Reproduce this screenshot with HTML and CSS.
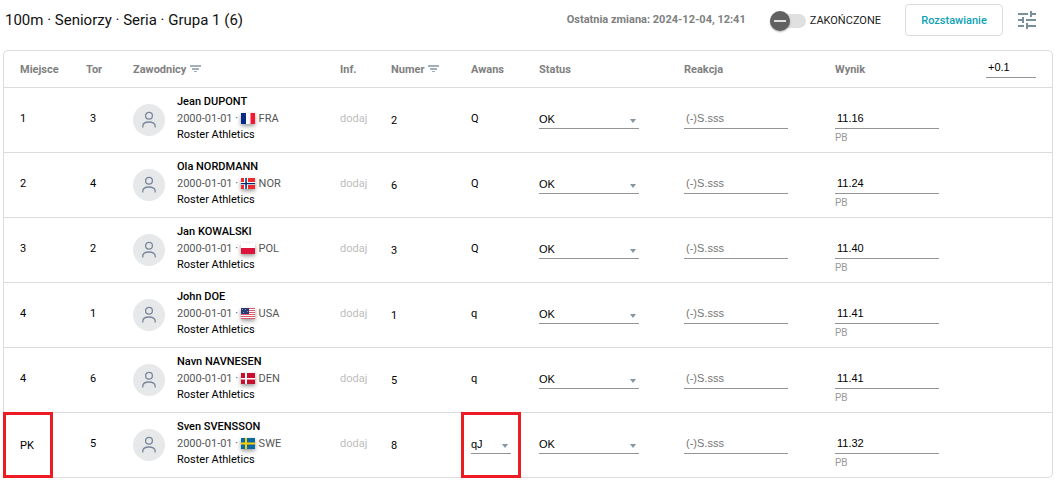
FILE: index.html
```html
<!DOCTYPE html>
<html lang="pl">
<head>
<meta charset="utf-8">
<title>100m · Seniorzy</title>
<link rel="stylesheet" href="styles.css">
</head>
<body>
<svg class="sprite" aria-hidden="true">
  <symbol id="filter" viewBox="0 0 12 8"><path d="M0 0h11v2H0zM2 3h7v2H2zM4 6h3v1H4z"/></symbol>
  <symbol id="person" viewBox="0 0 16 18"><circle cx="8" cy="4.7" r="3.4"/><path d="M1.8 16.5v-1.3c0-2.600 2.400-4.200 6.200-4.200s6.200 1.600 6.200 4.200v1.300"/></symbol>
  <symbol id="fra" viewBox="0 0 14 11"><path fill="#fff" d="M0 0h14v11H0z"/><path fill="#0a2a88" d="M0 0h5v11H0z"/><path fill="#f5152f" d="M9.500 0H14v11H9.500z"/></symbol>
  <symbol id="nor" viewBox="0 0 14 11"><path fill="#ef2b2d" d="M0 0h14v11H0z"/><path fill="#fff" d="M3 0h4v11H3zM0 4h14v3H0z"/><path fill="#002868" d="M4.300 0h1.500v11H4.300zM0 4.900h14v1.300H0z"/></symbol>
  <symbol id="pol" viewBox="0 0 14 11"><path fill="#fff" d="M0 0h14v11H0z"/><path fill="#dc143c" d="M0 5h14v6H0z"/></symbol>
  <symbol id="usa" viewBox="0 0 14 11"><path fill="#fff" d="M0 0h14v11H0z"/><path fill="#d8596c" d="M0 0h14v1H0zM0 2h14v1H0zM0 4h14v1H0zM0 6h14v1H0zM0 8h14v1H0zM0 10h14v1H0z"/><path fill="#2b3a72" d="M0 0h8v6H0z"/><path fill="#8d96b8" d="M1 1h1v1H1zM4 1h1v1H4zM6 3h1v1H6zM2 4h1v1H2z"/></symbol>
  <symbol id="den" viewBox="0 0 14 11"><path fill="#c8102e" d="M0 0h14v11H0z"/><path fill="#fff" d="M4 0h2v11H4zM0 5h14v1.500H0z"/></symbol>
  <symbol id="swe" viewBox="0 0 14 11"><path fill="#086aa5" d="M0 0h14v11H0z"/><path fill="#fecc02" d="M4 0h2v11H4zM0 4.500h14v2H0z"/></symbol>
</svg>

<header class="toolbar">
  <h1 class="title">100m · Seniorzy · Seria · Grupa 1 (6)</h1>
  <p class="changed">Ostatnia zmiana: 2024-12-04, 12:41</p>
  <label class="toggle"><input class="switch" type="checkbox"><span class="toggle-text">ZAKOŃCZONE</span></label>
  <button class="seed" type="button">Rozstawianie</button>
  <button class="settings" type="button" aria-label="Ustawienia">
    <svg width="24" height="24" viewBox="0 0 24 24"><path d="M3 17v2h6v-2H3zM3 5v2h10V5H3zm10 16v-2h8v-2h-8v-2h-2v6h2zM7 9v2H3v2h4v2h2V9H7zm14 4v-2H11v2h10zm-6-4h2V7h4V5h-4V3h-2v6z"/></svg>
  </button>
</header>

<main class="card">
<table class="results">
  <colgroup>
    <col class="w-place"><col class="w-lane"><col class="w-athlete"><col class="w-info"><col class="w-number"><col class="w-adv"><col class="w-status"><col class="w-result"><col class="w-result"><col class="w-wind">
  </colgroup>
  <thead>
    <tr>
      <th>Miejsce</th><th>Tor</th>
      <th>Zawodnicy <svg class="filter" width="12" height="8"><use href="#filter"/></svg></th>
      <th>Inf.</th>
      <th>Numer <svg class="filter" width="12" height="8"><use href="#filter"/></svg></th>
      <th>Awans</th><th>Status</th><th>Reakcja</th><th>Wynik</th>
      <th class="wind"><input class="field" aria-label="Wiatr" value="+0.1"></th>
    </tr>
  </thead>
  <tbody>
    <tr>
      <td>1</td><td class="lane">3</td>
      <td class="person"><div class="athlete"><span class="avatar"><svg width="16" height="18"><use href="#person"/></svg></span><div class="bio"><div class="name">Jean DUPONT</div><div class="born">2000-01-01 · <svg class="flag" width="14" height="11"><use href="#fra"/></svg> FRA</div><div>Roster Athletics</div></div></div></td>
      <td class="add">dodaj</td><td class="mid">2</td><td>Q</td>
      <td class="edit"><span class="pick"><select class="field" aria-label="Status"><option>OK</option></select></span></td>
      <td class="edit"><input class="field" aria-label="Reakcja" placeholder="(-)S.sss"></td>
      <td class="edit"><input class="field" aria-label="Wynik" value="11.16"><div class="note">PB</div></td><td></td>
    </tr>
    <tr>
      <td>2</td><td class="lane">4</td>
      <td class="person"><div class="athlete"><span class="avatar"><svg width="16" height="18"><use href="#person"/></svg></span><div class="bio"><div class="name">Ola NORDMANN</div><div class="born">2000-01-01 · <svg class="flag" width="14" height="11"><use href="#nor"/></svg> NOR</div><div>Roster Athletics</div></div></div></td>
      <td class="add">dodaj</td><td class="mid">6</td><td>Q</td>
      <td class="edit"><span class="pick"><select class="field" aria-label="Status"><option>OK</option></select></span></td>
      <td class="edit"><input class="field" aria-label="Reakcja" placeholder="(-)S.sss"></td>
      <td class="edit"><input class="field" aria-label="Wynik" value="11.24"><div class="note">PB</div></td><td></td>
    </tr>
    <tr>
      <td>3</td><td class="lane">2</td>
      <td class="person"><div class="athlete"><span class="avatar"><svg width="16" height="18"><use href="#person"/></svg></span><div class="bio"><div class="name">Jan KOWALSKI</div><div class="born">2000-01-01 · <svg class="flag" width="14" height="11"><use href="#pol"/></svg> POL</div><div>Roster Athletics</div></div></div></td>
      <td class="add">dodaj</td><td class="mid">3</td><td>Q</td>
      <td class="edit"><span class="pick"><select class="field" aria-label="Status"><option>OK</option></select></span></td>
      <td class="edit"><input class="field" aria-label="Reakcja" placeholder="(-)S.sss"></td>
      <td class="edit"><input class="field" aria-label="Wynik" value="11.40"><div class="note">PB</div></td><td></td>
    </tr>
    <tr>
      <td>4</td><td class="lane">1</td>
      <td class="person"><div class="athlete"><span class="avatar"><svg width="16" height="18"><use href="#person"/></svg></span><div class="bio"><div class="name">John DOE</div><div class="born">2000-01-01 · <svg class="flag" width="14" height="11"><use href="#usa"/></svg> USA</div><div>Roster Athletics</div></div></div></td>
      <td class="add">dodaj</td><td class="mid">1</td><td>q</td>
      <td class="edit"><span class="pick"><select class="field" aria-label="Status"><option>OK</option></select></span></td>
      <td class="edit"><input class="field" aria-label="Reakcja" placeholder="(-)S.sss"></td>
      <td class="edit"><input class="field" aria-label="Wynik" value="11.41"><div class="note">PB</div></td><td></td>
    </tr>
    <tr>
      <td>4</td><td class="lane">6</td>
      <td class="person"><div class="athlete"><span class="avatar"><svg width="16" height="18"><use href="#person"/></svg></span><div class="bio"><div class="name">Navn NAVNESEN</div><div class="born">2000-01-01 · <svg class="flag" width="14" height="11"><use href="#den"/></svg> DEN</div><div>Roster Athletics</div></div></div></td>
      <td class="add">dodaj</td><td class="mid">5</td><td>q</td>
      <td class="edit"><span class="pick"><select class="field" aria-label="Status"><option>OK</option></select></span></td>
      <td class="edit"><input class="field" aria-label="Reakcja" placeholder="(-)S.sss"></td>
      <td class="edit"><input class="field" aria-label="Wynik" value="11.41"><div class="note">PB</div></td><td></td>
    </tr>
    <tr>
      <td class="mid marked mark-place">PK</td><td class="lane">5</td>
      <td class="person"><div class="athlete"><span class="avatar"><svg width="16" height="18"><use href="#person"/></svg></span><div class="bio"><div class="name">Sven SVENSSON</div><div class="born">2000-01-01 · <svg class="flag" width="14" height="11"><use href="#swe"/></svg> SWE</div><div>Roster Athletics</div></div></div></td>
      <td class="add">dodaj</td><td class="mid">8</td>
      <td class="edit marked mark-adv"><span class="pick pick-small"><select class="field" aria-label="Awans"><option>qJ</option></select></span></td>
      <td class="edit"><span class="pick"><select class="field" aria-label="Status"><option>OK</option></select></span></td>
      <td class="edit"><input class="field" aria-label="Reakcja" placeholder="(-)S.sss"></td>
      <td class="edit"><input class="field" aria-label="Wynik" value="11.32"><div class="note">PB</div></td><td></td>
    </tr>
  </tbody>
</table>
</main>
</body>
</html>
```
FILE: styles.css
```css
*, *::before, *::after { box-sizing: border-box; }

body {
  margin: 0;
  padding: 4px 4px 4px 3px;
  background: #fff;
  color: #000;
  font: 11px/16px Roboto, "Liberation Sans", sans-serif;
}

.sprite { position: absolute; width: 0; height: 0; }

/* Toolbar */
.toolbar {
  display: flex;
  align-items: center;
  height: 32px;
  margin-bottom: 14px;
  padding: 0 14px 0 2px;
}
.title { flex: 1; margin: 0; font-size: 15px; font-weight: 400; line-height: 20px; color: #111; }
.changed { margin: 0 24px 0 0; font-weight: 700; color: #808080; }
.toggle { display: flex; align-items: center; gap: 4px; margin-right: 24px; color: #212121; }
.toggle-text { padding-top: 2px; }
.switch {
  appearance: none;
  position: relative;
  width: 36px;
  height: 14px;
  margin: 2px 0 0;
  border-radius: 7px;
  background: #e0e0e0;
}
.switch::before {
  content: "";
  position: absolute;
  top: -3px;
  left: 0;
  width: 20px;
  height: 20px;
  border-radius: 50%;
  background: #616161;
  box-shadow: 0 1px 2px rgba(0, 0, 0, .3);
}
.switch::after {
  content: "";
  position: absolute;
  top: 6px;
  left: 4px;
  width: 12px;
  height: 2px;
  background: #e0e0e0;
}
.seed {
  width: 98px;
  height: 32px;
  margin-right: 12px;
  padding: 1px 0 0;
  border: 1px solid #dcdcdc;
  border-radius: 4px;
  background: #fff;
  color: #0ba1b5;
  font: 500 11px/16px Roboto, sans-serif;
}
.settings { display: flex; padding: 0; border: 0; background: none; fill: #78909c; }

/* Results */
.card { border: 1px solid #dcdcdc; border-radius: 5px; }
.results { width: 100%; table-layout: fixed; border-collapse: separate; border-spacing: 0; }
.w-place { width: 66px; }
.w-lane { width: 47px; }
.w-athlete { width: 207px; }
.w-info { width: 51px; }
.w-number { width: 80px; }
.w-adv { width: 68px; }
.w-status { width: 145px; }
.w-result { width: 151px; }
.w-wind { width: 82px; }

th, td { padding: 0 0 0 16px; border-bottom: 1px solid #dcdcdc; text-align: left; }
th { height: 37px; padding-top: 2px; font-weight: 700; color: #808080; white-space: nowrap; }
td { height: 65px; padding-bottom: 2px; }
tbody tr:last-child td { height: 64px; border-bottom: 0; }
.filter { margin-left: 1px; fill: #a3afba; }
th.wind { padding-top: 6px; padding-right: 16px; vertical-align: top; }
td.mid { padding-top: 2px; padding-bottom: 0; }
td.person { padding-bottom: 0; }
td.lane { padding-left: 20px; }
.add { color: #bdbdbd; }

.athlete { display: flex; align-items: center; gap: 12px; }
.bio { padding-bottom: 3px; }
.avatar {
  display: flex;
  align-items: center;
  justify-content: center;
  width: 32px;
  height: 32px;
  border-radius: 50%;
  background: #e6e8ea;
  fill: none;
  stroke: #78879a;
  stroke-width: 1.300;
}
.name { font-weight: 500; }
.born { margin-top: 1px; color: #555; }
.flag { margin-right: 1px; vertical-align: -2px; filter: drop-shadow(0 2px 2px rgba(0, 0, 0, .4)); }

/* Underlined fields */
td.edit { padding-top: 20px; vertical-align: top; }
.field {
  appearance: none;
  display: block;
  width: 104px;
  height: 21px;
  padding: 0 2px;
  border: 0;
  border-bottom: 1px solid #949494;
  border-radius: 0;
  background: none;
  color: #000;
  font: 400 11px/16px "Liberation Sans", Arial, sans-serif;
}
.field::placeholder { color: #757575; opacity: 1; }
.wind .field { width: 50px; }
.pick { position: relative; display: block; width: 100px; }
.pick-small { width: 40px; }
.pick .field { width: 100%; padding: 1px 0 0; }
.pick::after {
  content: "";
  position: absolute;
  top: 11px;
  right: 3px;
  border: 3px solid transparent;
  border-top: 4px solid #8795a1;
  border-bottom: 0;
  pointer-events: none;
}
.note { margin-top: 1px; font-size: 10px; color: #999; }

/* Highlight frames */
.marked { position: relative; }
.marked::after {
  content: "";
  position: absolute;
  top: -1px;
  bottom: -1px;
  border: 3px solid #ed1c24;
  pointer-events: none;
}
.mark-place::after { left: -1px; width: 50px; }
.mark-adv::after { left: 6px; width: 60px; }
```
